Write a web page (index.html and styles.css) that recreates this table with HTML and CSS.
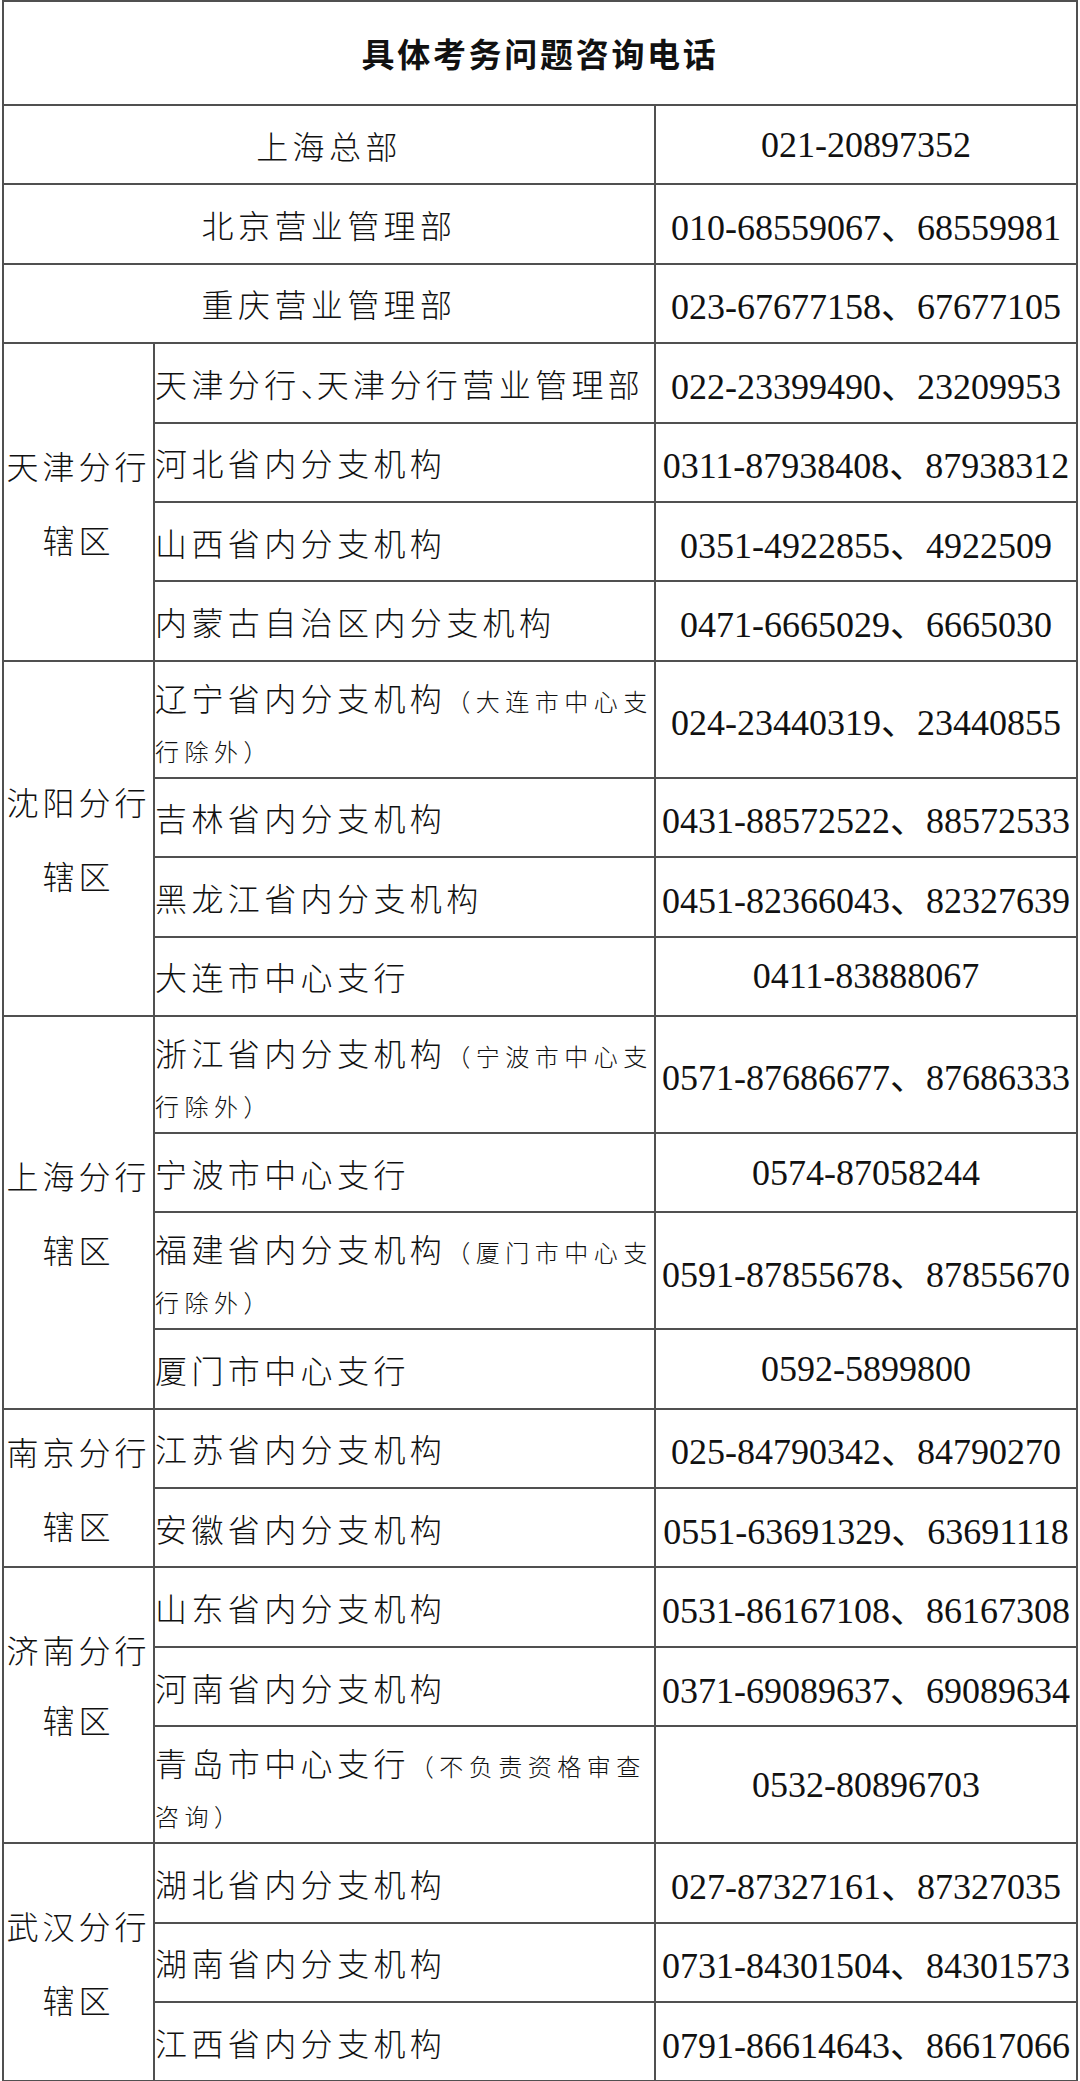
FILE: index.html
```html
<!DOCTYPE html>
<html lang="zh-CN">
<head>
<meta charset="utf-8">
<title>具体考务问题咨询电话</title>
<link rel="stylesheet" href="styles.css">
</head>
<body>
<table class="contacts">
  <colgroup>
    <col class="c-region">
    <col class="c-unit">
    <col class="c-phone">
  </colgroup>
  <tr class="row-title"><th colspan="3" class="title">具体考务问题咨询电话</th></tr>
  <tr class="row"><td colspan="2" class="name center">上海总部</td><td class="phone">021-20897352</td></tr>
  <tr class="row"><td colspan="2" class="name center">北京营业管理部</td><td class="phone">010-68559067、68559981</td></tr>
  <tr class="row"><td colspan="2" class="name center">重庆营业管理部</td><td class="phone">023-67677158、67677105</td></tr>

  <tr class="row"><td rowspan="4" class="region">天津分行<br>辖区</td><td class="name">天津分行<span class="pn">、</span>天津分行营业管理部</td><td class="phone">022-23399490、23209953</td></tr>
  <tr class="row"><td class="name">河北省内分支机构</td><td class="phone">0311-87938408、87938312</td></tr>
  <tr class="row"><td class="name">山西省内分支机构</td><td class="phone">0351-4922855、4922509</td></tr>
  <tr class="row"><td class="name">内蒙古自治区内分支机构</td><td class="phone">0471-6665029、6665030</td></tr>

  <tr class="row2"><td rowspan="4" class="region">沈阳分行<br>辖区</td><td class="name two">辽宁省内分支机构<span class="note">（大连市中心支<br>行除外）</span></td><td class="phone">024-23440319、23440855</td></tr>
  <tr class="row"><td class="name">吉林省内分支机构</td><td class="phone">0431-88572522、88572533</td></tr>
  <tr class="row"><td class="name">黑龙江省内分支机构</td><td class="phone">0451-82366043、82327639</td></tr>
  <tr class="row"><td class="name">大连市中心支行</td><td class="phone">0411-83888067</td></tr>

  <tr class="row2"><td rowspan="4" class="region">上海分行<br>辖区</td><td class="name two">浙江省内分支机构<span class="note">（宁波市中心支<br>行除外）</span></td><td class="phone">0571-87686677、87686333</td></tr>
  <tr class="row"><td class="name">宁波市中心支行</td><td class="phone">0574-87058244</td></tr>
  <tr class="row2"><td class="name two">福建省内分支机构<span class="note">（厦门市中心支<br>行除外）</span></td><td class="phone">0591-87855678、87855670</td></tr>
  <tr class="row"><td class="name">厦门市中心支行</td><td class="phone">0592-5899800</td></tr>

  <tr class="row"><td rowspan="2" class="region">南京分行<br>辖区</td><td class="name">江苏省内分支机构</td><td class="phone">025-84790342、84790270</td></tr>
  <tr class="row"><td class="name">安徽省内分支机构</td><td class="phone">0551-63691329、63691118</td></tr>

  <tr class="row"><td rowspan="3" class="region region-up">济南分行<br>辖区</td><td class="name">山东省内分支机构</td><td class="phone">0531-86167108、86167308</td></tr>
  <tr class="row"><td class="name">河南省内分支机构</td><td class="phone">0371-69089637、69089634</td></tr>
  <tr class="row2"><td class="name two">青岛市中心支行<span class="note">（不负责资格审查<br>咨询）</span></td><td class="phone">0532-80896703</td></tr>

  <tr class="row"><td rowspan="3" class="region">武汉分行<br>辖区</td><td class="name">湖北省内分支机构</td><td class="phone">027-87327161、87327035</td></tr>
  <tr class="row"><td class="name">湖南省内分支机构</td><td class="phone">0731-84301504、84301573</td></tr>
  <tr class="row"><td class="name">江西省内分支机构</td><td class="phone">0791-86614643、86617066</td></tr>
</table>
</body>
</html>
```

FILE: styles.css
```css
html, body {
  margin: 0;
  padding: 0;
  background: #ffffff;
}

.contacts {
  border-collapse: collapse;
  table-layout: fixed;
  width: 1074px;
  margin-left: 2px;
  color: #111111;
  font-family: "Liberation Serif", "Noto Sans CJK SC", serif;
}

.c-region { width: 151px; }
.c-unit { width: 501px; }
.c-phone { width: 422px; }

.contacts th,
.contacts td {
  border: 2px solid #505050;
  padding: 0;
  vertical-align: middle;
}

.row-title { height: 104px; }
.row { height: 79.4px; }
.row2 { height: 117px; }

.title {
  font-family: "Noto Sans CJK SC", sans-serif;
  font-weight: 700;
  font-size: 33px;
  letter-spacing: 2.7px;
  text-align: center;
}

.name {
  font-family: "Noto Sans CJK SC", sans-serif;
  font-weight: 300;
  font-size: 32px;
  letter-spacing: 4.4px;
  padding-left: 8px;
  text-align: left;
  white-space: nowrap;
}

.name.center {
  text-align: center;
  padding-left: 0;
}

.name.two {
  line-height: 50px;
  vertical-align: top;
  padding-top: 10px;
}

.pn {
  letter-spacing: -16px;
}

.note {
  font-size: 24px;
  letter-spacing: 5.5px;
  line-height: 24px;
}

.region {
  font-family: "Noto Sans CJK SC", sans-serif;
  font-weight: 300;
  font-size: 32px;
  letter-spacing: 4px;
  line-height: 74px;
  text-align: center;
  white-space: nowrap;
}

.contacts td.region-up {
  vertical-align: top;
  line-height: 70px;
  padding-top: 46px;
}

.phone {
  font-size: 36px;
  text-align: center;
  white-space: nowrap;
}
```
